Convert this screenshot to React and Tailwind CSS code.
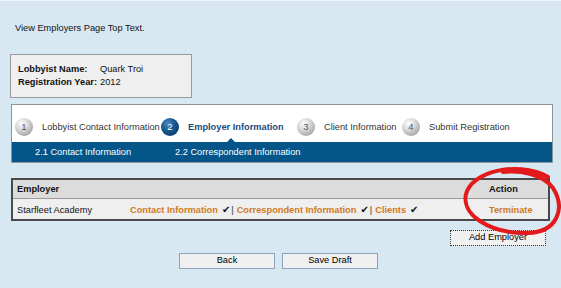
import React from "react";

const grayCircle =
  "bg-[radial-gradient(circle_at_38%_32%,#ffffff_0%,#dcdcdc_35%,#a8a8a8_75%,#8a8a8a_100%)]";
const blueCircle =
  "bg-[radial-gradient(circle_at_38%_32%,#4f8cc0_0%,#175a91_40%,#0b4273_75%,#062f55_100%)]";

function Step({ n, label, active, width }) {
  return (
    <div className={`flex items-center shrink-0 ${width}`}>
      <div
        className={`w-[18px] h-[18px] rounded-full flex items-center justify-center text-[9.5px] leading-none ${
          active ? blueCircle + " text-white" : grayCircle + " text-[#555]"
        }`}
      >
        {n}
      </div>
      <span
        className={`ml-[9px] whitespace-nowrap ${
          active ? "font-bold text-[#184e7e]" : "text-[#333]"
        }`}
      >
        {label}
      </span>
    </div>
  );
}

function Check() {
  return (
    <span className="font-['DejaVu_Sans',sans-serif] text-[10px] leading-none text-[#111] ml-[4px] mr-[1px]">
      ✔
    </span>
  );
}

export default function App() {
  return (
    <div className="relative w-[561px] h-[288px] overflow-hidden bg-[#d8e8f3] border-t border-[#eef5fa] font-['Liberation_Sans',Arial,sans-serif] text-[9.25px] leading-[11px] text-[#111]">
      <div className="pt-[22px] pl-[15px]">View Employers Page Top Text.</div>

      <div className="mt-[20px] ml-[10px] w-[182px] h-[44px] bg-[#efefef] border border-[#9a9a9a] pt-[8px] pl-[7px]">
        <div className="flex leading-[13px]">
          <span className="w-[82px] font-bold">Lobbyist Name:</span>
          <span>Quark Troi</span>
        </div>
        <div className="flex leading-[13px]">
          <span className="w-[82px] font-bold">Registration Year:</span>
          <span>2012</span>
        </div>
      </div>

      <div className="mt-[6px] ml-[11px] w-[542px] border border-[#8f9499] bg-white">
        <div className="h-[37px] flex items-start pt-[13px] pl-[3px]">
          <Step n="1" label="Lobbyist Contact Information" width="w-[146px]" />
          <Step n="2" label="Employer Information" active width="w-[136px]" />
          <Step n="3" label="Client Information" width="w-[105px]" />
          <Step n="4" label="Submit Registration" width="w-[120px]" />
        </div>
        <div className="relative h-[20px] bg-[#03558a] text-white flex items-center pl-[23px]">
          <div className="absolute left-[215px] top-[-4px] w-0 h-0 border-l-[4px] border-r-[4px] border-b-[4px] border-l-transparent border-r-transparent border-b-[#03558a]" />
          <span className="w-[140px] whitespace-nowrap">2.1 Contact Information</span>
          <span className="whitespace-nowrap">2.2 Correspondent Information</span>
        </div>
      </div>

      <div className="mt-[15px] ml-[11px] w-[539px] border-2 border-[#4a4a4a]">
        <div className="grid grid-cols-[113px_359px_63px] h-[19px] items-center bg-[#dcdcdc] border-b border-[#9a9a9a] font-bold">
          <span className="pl-[4px]">Employer</span>
          <span />
          <span className="pl-[4px]">Action</span>
        </div>
        <div className="grid grid-cols-[113px_359px_63px] h-[20px] items-center bg-[#efefef] pt-[2px]">
          <span className="pl-[4px] whitespace-nowrap">Starfleet Academy</span>
          <span className="pl-[4px] whitespace-nowrap flex items-center">
            <span className="font-bold text-[#cf7a1f]">Contact Information</span>
            <Check />
            <span className="text-[#333] mr-[3px]">|</span>
            <span className="font-bold text-[#cf7a1f]">Correspondent Information</span>
            <Check />
            <span className="text-[#333] mr-[3px]">|</span>
            <span className="font-bold text-[#cf7a1f]">Clients</span>
            <Check />
          </span>
          <span className="pl-[4px] font-bold text-[#cf7a1f]">Terminate</span>
        </div>
      </div>

      <div className="flex justify-end w-[550px] pr-[4px] mt-[9px]">
        <button className="w-[96px] h-[16px] flex items-center justify-center p-0 bg-[#f0f0f0] border border-dotted border-[#333] text-[9.25px] leading-none text-black">
          Add Employer
        </button>
      </div>

      <div className="flex gap-[7px] ml-[179px] mt-[7px]">
        <button className="w-[96px] h-[16px] flex items-center justify-center p-0 bg-[#f0f0f0] border border-[#8aa2bb] text-[9.25px] leading-none text-black">
          Back
        </button>
        <button className="w-[96px] h-[16px] flex items-center justify-center p-0 bg-[#f0f0f0] border border-[#8aa2bb] text-[9.25px] leading-none text-black">
          Save Draft
        </button>
      </div>

      <svg
        className="absolute left-0 top-0 pointer-events-none"
        width="561"
        height="288"
        viewBox="0 0 561 288"
      >
        <path
          d="M 548 176 C 526 162, 478 166, 467 190 C 458 213, 490 233, 528 232 C 557 231, 566 208, 553 187 C 543 173, 520 169, 503 171"
          fill="none"
          stroke="#e3191c"
          strokeWidth="4"
          strokeLinecap="round"
        />
      </svg>
    </div>
  );
}
